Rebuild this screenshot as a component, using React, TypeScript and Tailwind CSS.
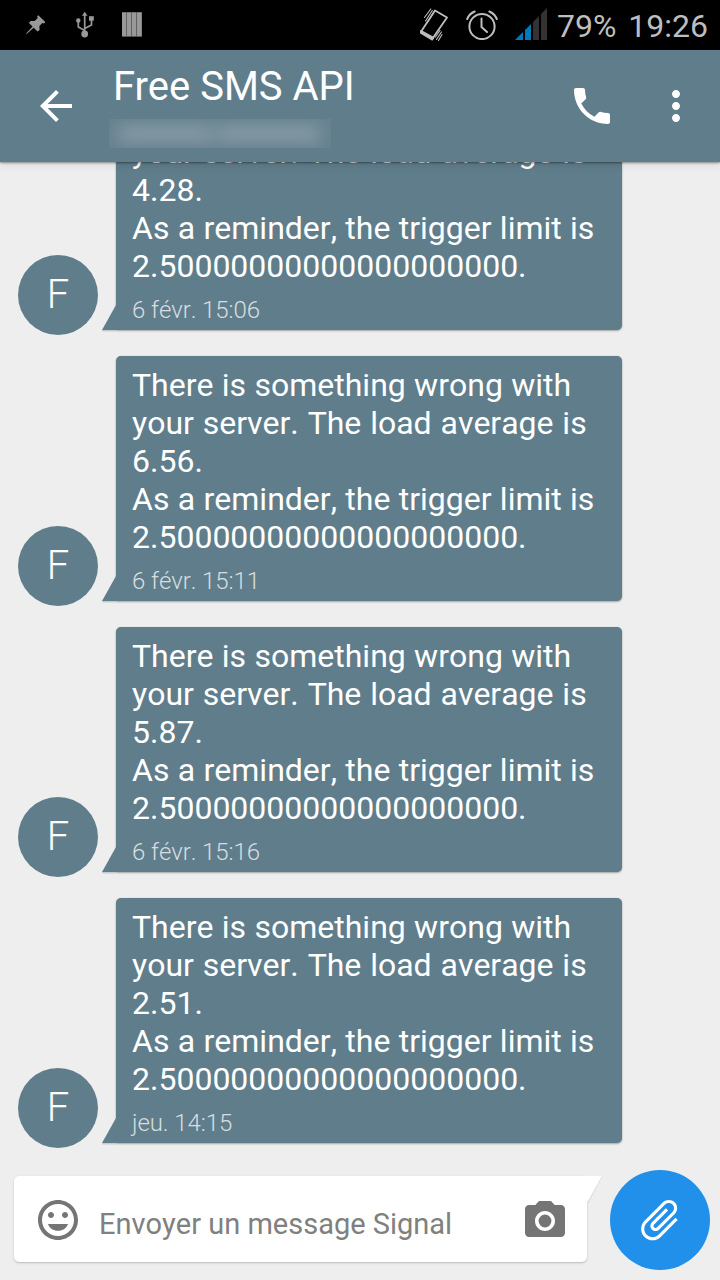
import React from 'react';

const messages = [
  { load: '4.28', time: '6 févr. 15:06' },
  { load: '6.56', time: '6 févr. 15:11' },
  { load: '5.87', time: '6 févr. 15:16' },
  { load: '2.51', time: 'jeu. 14:15' },
];

function Icon({ d, className }: { d: string; className: string }) {
  return (
    <svg viewBox="0 0 24 24" fill="currentColor" className={className}>
      <path d={d} />
    </svg>
  );
}

const ARROW = 'M20 11H7.83l5.59-5.59L12 4l-8 8 8 8 1.41-1.41L7.83 13H20v-2z';
const PHONE =
  'M6.62 10.79c1.44 2.83 3.76 5.14 6.59 6.59l2.2-2.2c.27-.27.67-.36 1.02-.24 1.12.37 2.33.57 3.57.57.55 0 1 .45 1 1V20c0 .55-.45 1-1 1-9.39 0-17-7.61-17-17 0-.55.45-1 1-1h3.5c.55 0 1 .45 1 1 0 1.25.2 2.45.57 3.57.11.35.03.74-.25 1.02l-2.2 2.2z';
const MORE =
  'M12 8c1.1 0 2-.9 2-2s-.9-2-2-2-2 .9-2 2 .9 2 2 2zm0 2c-1.1 0-2 .9-2 2s.9 2 2 2 2-.9 2-2-.9-2-2-2zm0 6c-1.1 0-2 .9-2 2s.9 2 2 2 2-.9 2-2-.9-2-2-2z';
const SMILE =
  'M11.99 2C6.47 2 2 6.48 2 12s4.47 10 9.99 10C17.52 22 22 17.52 22 12S17.52 2 11.99 2zM12 20c-4.42 0-8-3.58-8-8s3.58-8 8-8 8 3.58 8 8-3.58 8-8 8zm3.5-9c.83 0 1.5-.67 1.5-1.5S16.33 8 15.5 8 14 8.67 14 9.5s.67 1.5 1.5 1.5zm-7 0c.83 0 1.5-.67 1.5-1.5S9.33 8 8.5 8 7 8.67 7 9.5 7.67 11 8.5 11zM7 14c.7 2 2.6 3.4 5 3.4s4.3-1.4 5-3.4H7z';
const CAMERA =
  'M9 2L7.17 4H4c-1.1 0-2 .9-2 2v12c0 1.1.9 2 2 2h16c1.1 0 2-.9 2-2V6c0-1.1-.9-2-2-2h-3.17L15 2H9zm3 15c-2.76 0-5-2.24-5-5s2.24-5 5-5 5 2.24 5 5-2.24 5-5 5zM12 8.8a3.2 3.2 0 1 0 0 6.4a3.2 3.2 0 1 0 0-6.4z';
const CLIP =
  'M16.5 6v11.5c0 2.21-1.79 4-4 4s-4-1.79-4-4V5c0-1.38 1.12-2.5 2.5-2.5s2.5 1.12 2.5 2.5v10.5c0 .55-.45 1-1 1s-1-.45-1-1V6H10v9.5c0 1.38 1.12 2.5 2.5 2.5s2.5-1.12 2.5-2.5V5c0-2.21-1.79-4-4-4S7 2.79 7 5v12.5c0 3.04 2.46 5.5 5.5 5.5s5.5-2.46 5.5-5.5V6h-1.5z';

function StatusBar() {
  return (
    <div className="flex h-[50px] shrink-0 items-center bg-black pl-[25px] pr-3 text-[#bebebe]">
      <svg viewBox="0 0 20 20" className="mr-[31px] size-5" fill="#999">
        <path d="M13.3.3 20.3 7l-1.1 1.4-1.9-.5-2.9 3 .2 4-2 1.7-4-3.9L2.5 18.2.8 19.5l1.2-1.9 5.6-6.2L3.9 7.9l1.7-2 4 .2 3-2.9-.4-1.9z" />
      </svg>
      <svg viewBox="0 0 20 28" className="h-7 w-5" fill="none" stroke="#999" strokeWidth="1.7">
        <path d="M8.7 23V4M8.7 19.5 2.3 16V10M8.7 17.5 15.5 14V9" />
        <path d="M8.7.8 11.5 4.8H5.9z" fill="#999" stroke="none" />
        <circle cx="2.3" cy="9.5" r="2.2" fill="#999" stroke="none" />
        <path d="M13 5.2h4.8v4.5H13z" fill="#999" stroke="none" />
        <circle cx="8.7" cy="23" r="3.4" fill="#999" stroke="none" />
      </svg>
      <svg viewBox="0 0 20 26" className="ml-[26px] h-[26px] w-5">
        <path d="M0 0h20v25H0z" fill="#555" />
        <path d="M0 .5h4.2V24H0zM5 .5h4.2V24H5zM10 .5h4.2V24H10zM15 .5h4.7V24H15z" fill="#999" />
      </svg>
      <div className="grow" />
      <svg viewBox="0 0 28 34" className="mr-[18px] h-[34px] w-7 shrink-0" fill="none" stroke="#bebebe" strokeLinecap="round" strokeLinejoin="round">
        <path d="M15 2.4 27 9.5 12.5 30.5.8 24z" strokeWidth="1.8" />
        <path d="M.8 22.700 13.700 29.500 12.200 31.800.6 25z" fill="#bebebe" strokeWidth="1.4" />
        <path d="M4.5 9.500 10.800 1M5.500 13 12.300 2.500M7 15 14 4M15.500 29 20 22.500M16.500 31.500 21.500 24M18.500 32.500 22 26.500" strokeWidth="1.1" />
      </svg>
      <svg viewBox="0 0 32 30" className="mr-[17px] h-[30px] w-8 shrink-0" fill="none" stroke="#bebebe" strokeWidth="2" strokeLinecap="round">
        <circle cx="16" cy="16.5" r="12.6" />
        <path d="M15.5 8.500v8.500l5.500 5M1.200 9Q3.500 3.500 8.700 1.500M30.800 9Q28.500 3.500 23.300 1.500" />
      </svg>
      <svg viewBox="0 0 32 32" className="-mt-[3px] mr-[10px] size-8 shrink-0">
        <path d="M0 32 8 24v8z M10 22l6-6v16h-6z" fill="#0079b8" />
        <path d="M18 14l6-6v24h-6zM26 6l6-6v32h-6z" fill="#333" />
      </svg>
      <span className="mr-3 mt-px text-[32px] leading-none">79%</span>
      <span className="mt-px text-[32px] leading-none">19:26</span>
    </div>
  );
}

function Header() {
  return (
    <header className="relative z-10 flex h-28 shrink-0 items-center bg-[#607d8b] pl-8 pr-5 text-white shadow-[0_1px_2px_rgba(0,0,0,0.4),0_4px_8px_rgba(0,0,0,0.08)]">
      <Icon d={ARROW} className="size-12 shrink-0" />
      <div className="ml-[29px] flex h-full grow flex-col">
        <h1 className="ml-1 mt-[13px] whitespace-nowrap text-[40px] leading-[48px]">
          Free SMS API
        </h1>
        <div className="mt-2 flex h-[29px] w-[222px] items-center overflow-hidden bg-[#67828f]">
          <div className="ml-2 h-4 w-[98px] rounded-full bg-[#889ca8] blur-[8px]" />
          <div className="h-4 w-[106px] rounded-full bg-[#889ca8] blur-[8px]" />
        </div>
      </div>
      <Icon d={PHONE} className="mr-9 size-12 shrink-0" />
      <Icon d={MORE} className="size-12 shrink-0" />
    </header>
  );
}

function Message({ load, time }: { load: string; time: string }) {
  return (
    <div className="flex shrink-0 items-end">
      <div className="-mb-[5px] ml-[18px] mr-[18px] flex size-20 shrink-0 items-center justify-center rounded-full bg-[#607d8b] text-[40px] font-light text-white">
        F
      </div>
      <div className="relative h-[245px] w-[506px] rounded-[5px] rounded-bl-none bg-[#607d8b] px-4 pt-[10px] text-white shadow-[0_1px_2px_rgba(0,0,0,0.3),0_0_1px_rgba(0,0,0,0.2)]">
        <svg viewBox="0 0 14 27" className="absolute -left-[14px] bottom-[-2px] h-[27px] w-[14px]">
          <path d="M0 25h14v1.5H.5z" fill="#c6cacc" />
          <path d="M14 0v25H0z" fill="#607d8b" />
        </svg>
        <p className="whitespace-nowrap text-[32px] leading-[38px] [font-kerning:none] [word-spacing:0.4px]">
          There is something wrong with
          <br />
          <span className="[word-spacing:0.9px]">your server. The load average is</span>
          <br />
          {load}.<br />
          As a reminder, the trigger limit is
          <br />
          2.50000000000000000000.
        </p>
        <p className="mt-[11px] text-[24px] font-light leading-7 tracking-[-0.08px] text-white/75 [font-kerning:none]">
          {time}
        </p>
      </div>
    </div>
  );
}

function Composer() {
  return (
    <div className="flex shrink-0 items-center pb-[10px] pl-[14px] pr-[10px]">
      <div className="relative -mt-[2px] flex h-[86px] w-[573px] items-center rounded-[5px] rounded-tr-none bg-white pl-5 pr-[18px] shadow-[0_1px_2px_rgba(0,0,0,0.22)]">
        <Icon d={SMILE} className="mt-[2px] size-12 shrink-0 text-[#757575]" />
        <span className="ml-[17px] mt-[9px] w-[370px] shrink-0 whitespace-nowrap text-[29px] leading-8 text-[#808080] [font-kerning:none]">
          Envoyer un message Signal
        </span>
        <Icon d={CAMERA} className="ml-auto mt-[4px] size-12 shrink-0 text-[#757575]" />
        <svg viewBox="0 0 16 28" className="absolute -right-[15.5px] top-0 h-7 w-4">
          <path d="M1 0h14.5L1.5 26.5H1z" fill="#d2d2d2" />
          <path d="M0 0h15L1 25.5H0z" fill="#fff" />
        </svg>
      </div>
      <div className="ml-[23px] flex size-[100px] shrink-0 items-center justify-center rounded-full bg-[#2090ea] text-white">
        <Icon d={CLIP} className="size-[50px] rotate-45" />
      </div>
    </div>
  );
}

export default function App() {
  return (
    <div className="flex h-[1280px] w-[720px] flex-col overflow-hidden bg-[#eee] font-['Roboto',sans-serif]">
      <StatusBar />
      <Header />
      <main className="flex min-h-0 grow flex-col justify-end gap-[26px] overflow-hidden pb-[27px]">
        {messages.map((m) => (
          <Message key={m.time} load={m.load} time={m.time} />
        ))}
      </main>
      <Composer />
    </div>
  );
}
